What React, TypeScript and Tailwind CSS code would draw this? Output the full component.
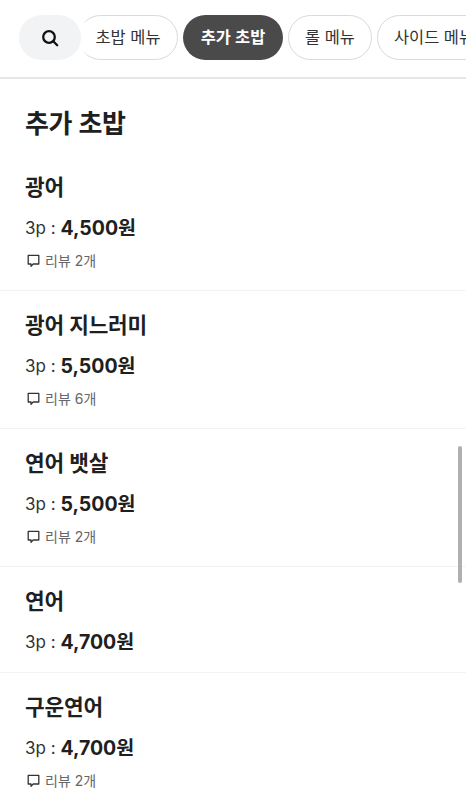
import React from "react";

function Bubble() {
  return (
    <svg width="15" height="15" viewBox="0 0 15 15" fill="none" className="shrink-0">
      <path d="M2.2 2.4h10.6v8.6H7.2L5 13.2V11H2.2z" stroke="#333" strokeWidth="1.3" strokeLinejoin="round" />
    </svg>
  );
}

const items = [
  { name: "광어", price: "4,500원", review: "리뷰 2개" },
  { name: "광어 지느러미", price: "5,500원", review: "리뷰 6개" },
  { name: "연어 뱃살", price: "5,500원", review: "리뷰 2개" },
  { name: "연어", price: "4,700원", review: "" },
  { name: "구운연어", price: "4,700원", review: "리뷰 2개" },
];

function Chip({ label, active, className }: { label: string; active?: boolean; className: string }) {
  return (
    <div
      className={
        "h-[45px] shrink-0 rounded-full flex items-center text-[16.4px] whitespace-nowrap " +
        (active
          ? "bg-[#4a4a4a] text-white font-semibold "
          : "bg-white border border-[#d9d9d9] text-[#333] ") +
        className
      }
    >
      {label}
    </div>
  );
}

export default function App() {
  return (
    <div
      className="relative w-[466px] h-[810px] overflow-hidden bg-white text-[#1f1f1f]"
      style={{ fontFamily: '"Inter", "Noto Sans CJK KR", sans-serif' }}
    >
      <div className="relative h-[79px] border-b-2 border-[#e6e6e6] overflow-hidden">
        <div className="flex gap-[5px] pt-[15px] pl-[78px]">
          <Chip label="초밥 메뉴" className="w-[100px] justify-center" />
          <Chip label="추가 초밥" active className="w-[100px] justify-center" />
          <Chip label="롤 메뉴" className="w-[84px] justify-center" />
          <Chip label="사이드 메뉴" className="pl-[16px] pr-[16px]" />
        </div>
        <div className="absolute left-[78px] top-[12px] w-[10px] h-[52px] bg-gradient-to-r from-white via-white to-transparent" />
        <div className="absolute left-[19px] top-[15px] w-[62px] h-[45px] rounded-full bg-[#f1f3f4] flex items-center justify-center">
          <svg width="20" height="20" viewBox="0 0 20 20" fill="none">
            <circle cx="9" cy="9" r="5.8" stroke="#111" strokeWidth="2.3" />
            <path d="M13.3 13.3L17.2 17.2" stroke="#111" strokeWidth="2.3" strokeLinecap="round" />
          </svg>
        </div>
      </div>

      <h2 className="px-[25px] pt-[27px] text-[26px] leading-[36px] font-semibold tracking-[-0.3px]">추가 초밥</h2>

      <div className="mt-[11px]">
        {items.map((it) => (
          <div key={it.name} className="px-[25px] pt-[18px] border-b border-[#f3f3f3]">
            <div className="text-[21.4px] leading-[32px] font-semibold tracking-[-0.2px]">{it.name}</div>
            <div className="mt-[10px] h-[32px] flex items-center text-[17px]">
              <span className="text-[#333]">3p :&nbsp;</span>
              <span className="text-[19.5px] font-bold">{it.price}</span>
            </div>
            {it.review ? (
              <div className="mt-[5px] mb-[20px] h-[20px] flex items-center gap-[4px] ml-[1px] text-[14px] text-[#666]">
                <Bubble />
                <span>{it.review}</span>
              </div>
            ) : (
              <div className="h-[13px]" />
            )}
          </div>
        ))}
      </div>

      <div className="absolute right-[4px] top-[446px] w-[4px] h-[137px] rounded-full bg-[#b0b0b0]" />
    </div>
  );
}
